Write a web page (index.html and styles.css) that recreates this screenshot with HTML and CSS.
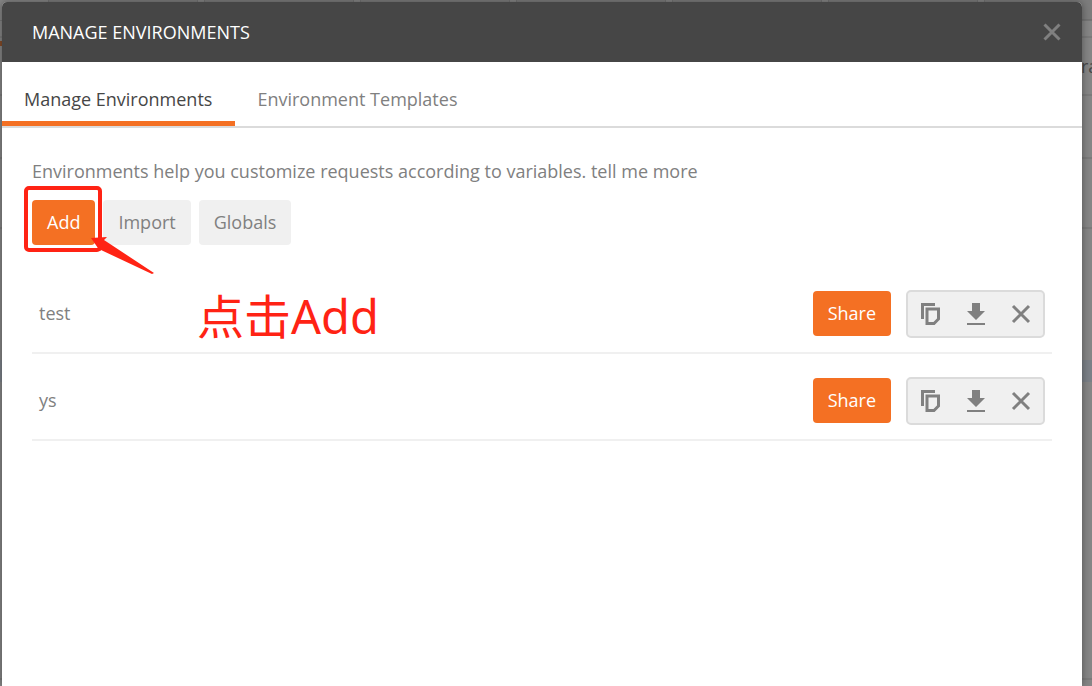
FILE: index.html
```html
<!DOCTYPE html>
<html lang="en">
<head>
    <meta charset="UTF-8">
    <meta name="viewport" content="width=device-width, initial-scale=1.0">
    <title>Manage Environments</title>
    <link rel="stylesheet" href="styles.css">
</head>
<body>
    <!-- dimmed app behind the dialog -->
    <div class="workspace" aria-hidden="true">
        <div class="request-tabs">
            <span></span><span></span><span></span><span></span><span></span><span></span><span></span>
        </div>
        <div class="bar bar-tools"></div>
        <div class="bar bar-title">ra</div>
        <div class="bar bar-url"></div>
        <div class="bar bar-params"></div>
        <div class="bar bar-body"><div class="selected-line"></div></div>
        <div class="tab-mark"></div>
    </div>

    <div class="modal" role="dialog" aria-labelledby="modal-title">
        <header class="modal-header">
            <h1 id="modal-title">MANAGE ENVIRONMENTS</h1>
            <button class="close" aria-label="Close">
                <svg width="18" height="18" viewBox="0 0 18 18"><path d="M1.500 1.500L16.500 16.500M16.500 1.500L1.500 16.500"/></svg>
            </button>
        </header>

        <nav class="tabs">
            <a href="#manage" class="tab active">Manage Environments</a>
            <a href="#templates" class="tab">Environment Templates</a>
        </nav>

        <main class="content">
            <p class="intro">Environments help you customize requests according to variables. <a href="#more">tell me more</a></p>

            <div class="actions">
                <div class="add-wrap">
                    <button class="btn btn-primary">Add</button>
                    <div class="highlight"></div>
                    <svg class="arrow" width="64" height="38" viewBox="0 0 64 38"><path d="M0 1L16 0L13 3L63 36L61 37L10 13L9 14Z"/></svg>
                    <div class="note" lang="zh">点击Add</div>
                </div>
                <button class="btn">Import</button>
                <button class="btn">Globals</button>
            </div>

            <ul class="env-list">
                <li class="env">
                    <a href="#test" class="env-name">test</a>
                    <button class="btn btn-primary">Share</button>
                    <div class="tools">
                        <button aria-label="Duplicate"><svg width="20" height="22" viewBox="0 0 20 22"><path class="line" d="M1.500 16V1.500H14M6 6H17.500V16L13 20.500H6Z"/></svg></button>
                        <button aria-label="Download"><svg width="20" height="22" viewBox="0 0 20 22"><path d="M6 0H14V8H19L10 17L1 8H6ZM1 20H19V22H1Z"/></svg></button>
                        <button aria-label="Delete"><svg width="20" height="22" viewBox="0 0 20 22"><path class="line" d="M2 3L18 19M18 3L2 19"/></svg></button>
                    </div>
                </li>
                <li class="env">
                    <a href="#ys" class="env-name">ys</a>
                    <button class="btn btn-primary">Share</button>
                    <div class="tools">
                        <button aria-label="Duplicate"><svg width="20" height="22" viewBox="0 0 20 22"><path class="line" d="M1.500 16V1.500H14M6 6H17.500V16L13 20.500H6Z"/></svg></button>
                        <button aria-label="Download"><svg width="20" height="22" viewBox="0 0 20 22"><path d="M6 0H14V8H19L10 17L1 8H6ZM1 20H19V22H1Z"/></svg></button>
                        <button aria-label="Delete"><svg width="20" height="22" viewBox="0 0 20 22"><path class="line" d="M2 3L18 19M18 3L2 19"/></svg></button>
                    </div>
                </li>
            </ul>
        </main>
    </div>
</body>
</html>
```
FILE: styles.css
```css
*{
    margin: 0;
    padding: 0;
    box-sizing: border-box;
}

body{
    min-height: 100vh;
    overflow: hidden;
    display: flex;
    padding: 2px 10px 0 2px;
    background-color: #868686;
    color: #808080;
    font-family: "Open Sans", "Noto Sans CJK SC", sans-serif;
    font-size: 18px;
    line-height: 24px;
}

a{
    color: inherit;
    text-decoration: none;
}

button{
    border: none;
    background: none;
    color: inherit;
    font: inherit;
    cursor: pointer;
}

/* background app */
.workspace{
    position: absolute;
    inset: 0;
    overflow: hidden;
    display: flex;
    flex-direction: column;
}

.request-tabs{
    height: 21px;
    display: flex;
    gap: 6px;
    padding-left: 48px;
    border-bottom: 1px solid #757575;
}

.request-tabs span{
    flex: none;
    width: 150px;
    background-color: #7d7d7d;
    border: 1px solid #727272;
    border-top: none;
}

.bar{
    border-bottom: 2px solid #7b7b7b;
}

.bar-tools{
    height: 17px;
}

.bar-title{
    height: 58px;
    padding-top: 16px;
    padding-left: calc(100% - 11px);
    color: #484848;
}

.bar-url{
    height: 63px;
}

.bar-params{
    height: 70px;
}

.bar-body{
    height: 451px;
    padding-top: 131px;
}

.selected-line{
    height: 22px;
    background-color: #7b8188;
}

.tab-mark{
    position: absolute;
    top: 41px;
    left: 0;
    width: 8px;
    height: 5px;
    background-color: #864b27;
}

/* dialog */
.modal{
    position: relative;
    flex: 1;
    background-color: #fff;
    border-radius: 5px 5px 0 0;
    box-shadow: 0 0 8px rgba(0, 0, 0, 0.4);
}

.modal-header{
    height: 60px;
    display: flex;
    align-items: center;
    justify-content: space-between;
    padding: 0 21px 0 30px;
    background-color: #464646;
    border-radius: 5px 5px 0 0;
    color: #fff;
}

.modal-header h1{
    font-size: 18px;
    font-weight: 400;
}

.close{
    display: flex;
}

.close svg{
    fill: none;
    stroke: #808080;
    stroke-width: 3;
}

.tabs{
    display: flex;
    border-bottom: 2px solid #dbdbdb;
}

.tab{
    height: 64px;
    padding: 25px 23px 0 22px;
    border-bottom: 5px solid transparent;
}

.tab.active{
    color: #464646;
    border-bottom-color: #f47023;
}

.content{
    padding: 31px 30px;
}

.actions{
    display: flex;
    gap: 8px;
    margin: 17px 0 22px;
}

.btn{
    height: 45px;
    padding: 0 15px 2px;
    border-radius: 4px;
    background-color: #f0f0f0;
}

.btn-primary{
    background-color: #f47023;
    color: #fff;
}

.env-list{
    list-style: none;
}

.env{
    display: flex;
    align-items: center;
    padding: 23px 7px 14px;
    border-bottom: 2px solid #f0f0f0;
}

.env .btn{
    margin-bottom: 1px;
}

.env-name{
    flex: 1;
    padding-bottom: 2px;
}

.tools{
    display: flex;
    height: 48px;
    margin-left: 15px;
    border: 2px solid #dbdbdb;
    border-radius: 5px;
    background-color: #f0f0f0;
}

.tools button{
    width: 45px;
    display: flex;
    align-items: center;
    justify-content: center;
}

.tools svg{
    fill: #808080;
}

.tools .line{
    fill: none;
    stroke: #808080;
    stroke-width: 3;
}

/* red marks over the Add button */
.add-wrap{
    position: relative;
}

.highlight{
    position: absolute;
    top: -14px;
    left: -8px;
    right: -7px;
    bottom: -7px;
    border: 4px solid #ff2314;
    border-radius: 5px;
    pointer-events: none;
    z-index: 1;
}

.arrow{
    position: absolute;
    top: 37px;
    left: 59px;
    fill: #ff2314;
    z-index: 1;
}

.note{
    position: absolute;
    top: 84px;
    left: 165px;
    color: #ff2314;
    font-family: "Noto Sans", "Noto Sans CJK SC", sans-serif;
    font-size: 47px;
    line-height: 64px;
    white-space: nowrap;
}
```
